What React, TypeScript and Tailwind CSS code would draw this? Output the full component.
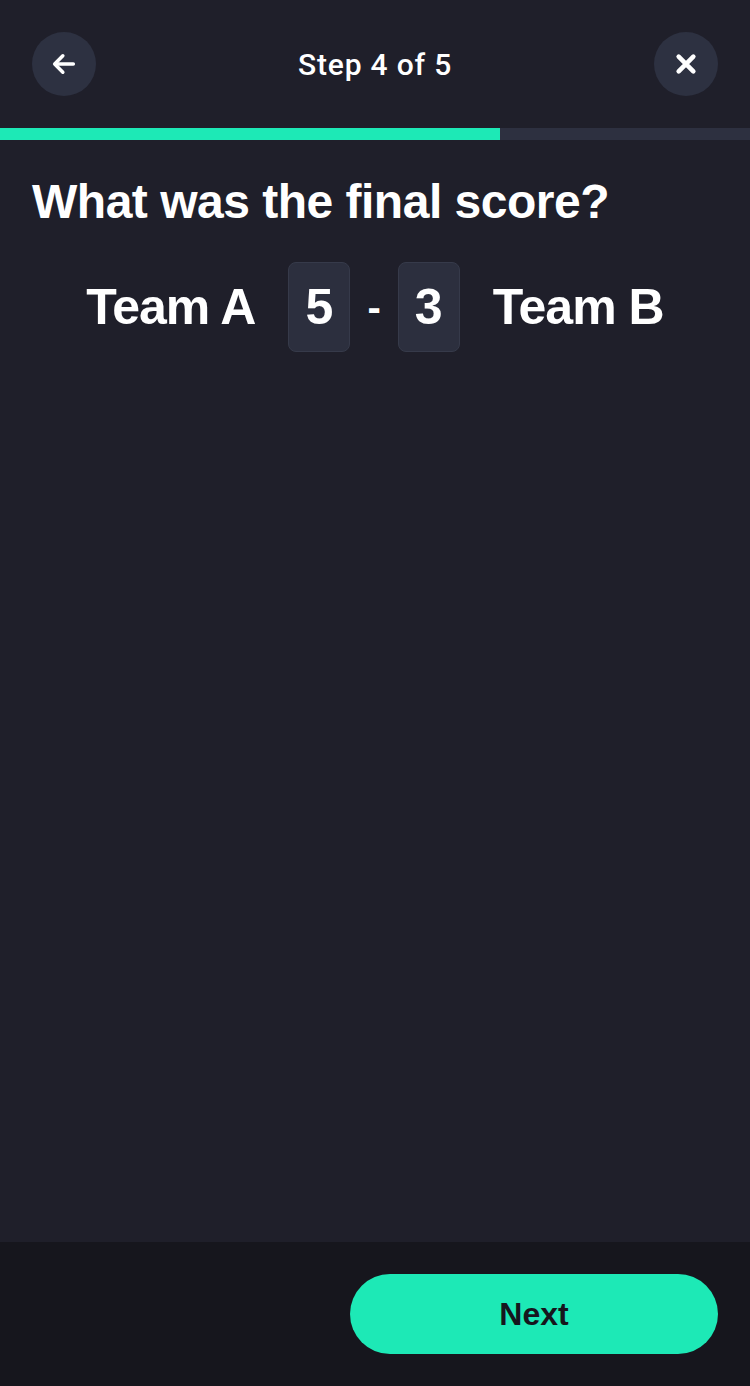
import React from 'react';

export default function App() {
  return (
    <div
      className="flex flex-col h-[1386px] w-[750px] bg-[#1f1f2a] text-white"
      style={{ fontFamily: '"Liberation Sans", Arial, sans-serif' }}
    >
      {/* Header */}
      <header className="flex items-center justify-between px-8 pt-8 pb-8">
        <button className="w-16 h-16 rounded-full bg-[#2d3141] flex items-center justify-center">
          <svg width="28" height="28" viewBox="0 0 24 24" fill="none" stroke="white" strokeWidth="3" strokeLinecap="round" strokeLinejoin="round">
            <path d="M20 12H5" />
            <path d="M11 5l-7 7 7 7" />
          </svg>
        </button>
        <span className="text-[30px] font-medium tracking-[0.8px]" style={{ fontFamily: 'Roboto, sans-serif' }}>
          Step 4 of 5
        </span>
        <button className="w-16 h-16 rounded-full bg-[#2d3141] flex items-center justify-center">
          <svg width="22" height="22" viewBox="0 0 24 24" fill="none" stroke="white" strokeWidth="5" strokeLinecap="round">
            <path d="M4 4l16 16M20 4L4 20" />
          </svg>
        </button>
      </header>

      {/* Progress */}
      <div className="h-3 w-full bg-[#2d3040]">
        <div className="h-full w-[500px] bg-[#1de9b6]" />
      </div>

      {/* Content */}
      <main className="flex-1 px-8 pt-8">
        <h1 className="text-[48px] font-bold leading-[60px] tracking-[-0.5px]">What was the final score?</h1>
        <div className="flex items-center justify-center mt-[30px]">
          <span className="text-[50px] font-bold tracking-[-1px]">Team A</span>
          <div className="ml-[33px] w-[62px] h-[90px] rounded-lg bg-[#2c2f3e] border border-[#363a4a] flex items-center justify-center text-[50px] font-bold">
            5
          </div>
          <span className="mx-[17px] text-[40px] font-bold">-</span>
          <div className="w-[62px] h-[90px] rounded-lg bg-[#2c2f3e] border border-[#363a4a] flex items-center justify-center text-[50px] font-bold">
            3
          </div>
          <span className="ml-[33px] text-[50px] font-bold tracking-[-1px]">Team B</span>
        </div>
      </main>

      {/* Footer */}
      <footer className="h-[144px] bg-[#16161d] flex items-center justify-end px-8">
        <button className="w-[368px] h-20 rounded-full bg-[#1de9b6] text-[#16161d] text-[32px] font-bold">
          Next
        </button>
      </footer>
    </div>
  );
}
